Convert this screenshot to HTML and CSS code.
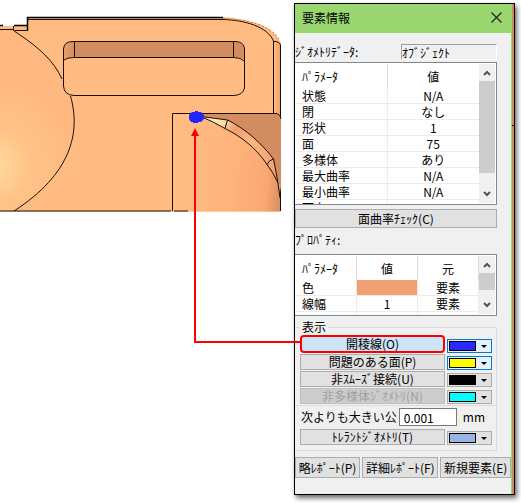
FILE: index.html
```html
<!DOCTYPE html>
<html lang="ja">
<head>
<meta charset="utf-8">
<title>要素情報</title>
<link rel="stylesheet" href="styles.css">
</head>
<body>
<main class="workspace">
  <section class="viewport" aria-label="モデル">
    <svg class="model" width="282" height="212" viewBox="0 0 282 212" fill="none" stroke="#1a1008" stroke-width="1">
      <defs>
        <radialGradient id="sphere" gradientUnits="userSpaceOnUse" cx="-8" cy="166" r="85">
          <stop offset="0" stop-color="#ffdc9c"/><stop offset=".45" stop-color="#ffc388"/><stop offset="1" stop-color="#ffb980"/>
        </radialGradient>
        <linearGradient id="dome" gradientUnits="userSpaceOnUse" x1="185" y1="180" x2="281" y2="190">
          <stop offset="0" stop-color="#ffbc82"/><stop offset=".5" stop-color="#ffb27b"/><stop offset=".85" stop-color="#fba774"/><stop offset="1" stop-color="#d98f64"/>
        </linearGradient>
        <linearGradient id="rim" gradientUnits="userSpaceOnUse" x1="205" y1="117" x2="276" y2="172">
          <stop offset="0" stop-color="#fff8dc"/><stop offset=".2" stop-color="#ffdca5"/><stop offset=".35" stop-color="#ef9d70"/><stop offset=".55" stop-color="#ffb780"/><stop offset="1" stop-color="#f3a072"/>
        </linearGradient>
        <linearGradient id="corner" gradientUnits="userSpaceOnUse" x1="64" y1="0" x2="75" y2="0">
          <stop offset="0" stop-color="#e9a06f"/><stop offset="1" stop-color="#cf8b60"/>
        </linearGradient>
        <linearGradient id="edge" gradientUnits="userSpaceOnUse" x1="274" y1="0" x2="281" y2="0">
          <stop offset="0" stop-color="#ffbb80"/><stop offset="1" stop-color="#ef9b6b"/>
        </linearGradient>
      </defs>
      <path stroke="none" fill="#ffbb81" d="M0 26H28V17H223C248 19 272 24 281 43V211.500H0Z"/>
      <path stroke="none" fill="url(#sphere)" d="M0 30H14C36 46 52 60 62 78L70 96C80 130 73 172 14 211H0Z"/>
      <path stroke="none" fill="url(#edge)" d="M274 41Q278 41 281 45V117L274 113Z"/>
      <path d="M0 25.500H3M14 25.500H27.500M27.500 30.500V17.500H223" stroke-width="1.500" stroke="#000"/>
      <path d="M28 19.500H223C245 20 268 27 273.500 41V113.500M0 29.500H14M14.500 30.500H28M13.500 26V30.500L20 35C38 47 54 61 62 79M70.500 96C81 133 71 174 14 211"/>
      <path d="M223 18.500C248 20 270 25 279 39" stroke="#b77b52" stroke-dasharray="2 2"/>
      <path d="M273.500 41.500Q279 41 280.500 45V211" />
      <path stroke="none" fill="#d38c60" d="M64 60V49Q64 42 74 41.500H234Q244 42 244 49V60Q241 57 234 57H74Q67 57 64 60Z"/>
      <path stroke="none" fill="url(#corner)" d="M64 60V49Q64 42 74 41.500V57Q67 57 64 60Z"/>
      <path d="M63.500 86V49Q64 42 72 41.500H236Q244 42 244.500 49V88Q243 95 234 95.500H74Q64 95 63.500 86M64 60Q67 57.500 74 57.500H234Q241 57.500 244 61M74.500 42V57M233.500 42V57"/>
      <path stroke="none" fill="url(#dome)" d="M173 114H192C225 121 271 147 280 190V211.500H173Z"/>
      <path stroke="none" fill="#d38c60" d="M200 114H278L281 118V192C275 158 246 122 200 116Z"/>
      <path fill="url(#rim)" d="M201 116.500Q216 118.500 227.500 120C246 129 262 144 273.500 159Q276 171 278 183Q273 172 267 164.500C256 148 242 137 225 128.500Q214 122 201 116.500Z"/>
      <path d="M172.500 211V113.500H277Q281 115 281 119M227.500 120L225 128.500M273.500 159Q269 160 267 164.500M278 183L280 198M0 211H171M174 211H188"/>
    </svg>
  </section>

  <section class="dialog" aria-labelledby="dialog-title">
    <header class="titlebar">
      <h1 id="dialog-title">要素情報</h1>
      <button class="close" aria-label="閉じる">
        <svg width="11" height="11" viewBox="0 0 11 11" stroke="#222" stroke-width="1.200"><path d="M.5.500l10 10M10.500.500l-10 10"/></svg>
      </button>
    </header>
    <div class="content">
      <div class="object-row">
        <label for="object">ｼﾞｵﾒﾄﾘﾃﾞｰﾀ:</label>
        <input id="object" class="sunken" value="ｵﾌﾞｼﾞｪｸﾄ" readonly>
      </div>

      <div class="list list-geometry">
        <table class="two">
          <thead><tr><th>ﾊﾟﾗﾒｰﾀ</th><th>値</th></tr></thead>
          <tbody>
            <tr><td>状態</td><td>N/A</td></tr>
            <tr><td>閉</td><td>なし</td></tr>
            <tr><td>形状</td><td>1</td></tr>
            <tr><td>面</td><td>75</td></tr>
            <tr><td>多様体</td><td>あり</td></tr>
            <tr><td>最大曲率</td><td>N/A</td></tr>
            <tr><td>最小曲率</td><td>N/A</td></tr>
            <tr><td>面上</td><td></td></tr>
          </tbody>
        </table>
        <div class="scrollbar">
          <svg width="8" height="6" viewBox="0 0 8 6"><path d="M1 5l3-3 3 3"/></svg>
          <span class="thumb"></span>
          <svg class="down" width="8" height="6" viewBox="0 0 8 6"><path d="M1 1l3 3 3-3"/></svg>
        </div>
      </div>

      <button class="btn check">面曲率ﾁｪｯｸ(C)</button>

      <h2 class="caption">ﾌﾟﾛﾊﾟﾃｨ:</h2>

      <div class="list list-property">
        <table class="three">
          <thead><tr><th>ﾊﾟﾗﾒｰﾀ</th><th>値</th><th>元</th></tr></thead>
          <tbody>
            <tr><td>色</td><td class="fill" aria-label="オレンジ"></td><td>要素</td></tr>
            <tr><td>線幅</td><td>1</td><td>要素</td></tr>
            <tr><td></td><td></td><td></td></tr>
          </tbody>
        </table>
        <div class="scrollbar">
          <svg width="8" height="6" viewBox="0 0 8 6"><path d="M1 5l3-3 3 3"/></svg>
          <span class="thumb"></span>
          <svg class="down" width="8" height="6" viewBox="0 0 8 6"><path d="M1 1l3 3 3-3"/></svg>
        </div>
      </div>

      <fieldset class="display">
        <legend>表示</legend>
        <div class="option">
          <button class="btn active">開稜線(O)</button>
          <div class="picker hot"><select aria-label="開稜線の色"></select><span class="swatch blue"></span><span class="arrow"></span></div>
        </div>
        <div class="option">
          <button class="btn">問題のある面(P)</button>
          <div class="picker hot"><select aria-label="問題のある面の色"></select><span class="swatch yellow"></span><span class="arrow"></span></div>
        </div>
        <div class="option">
          <button class="btn">非ｽﾑｰｽﾞ接続(U)</button>
          <div class="picker"><select aria-label="非スムーズ接続の色"></select><span class="swatch black"></span><span class="arrow"></span></div>
        </div>
        <div class="option">
          <button class="btn" disabled>非多様体ｼﾞｵﾒﾄﾘ(N)</button>
          <div class="picker"><select aria-label="非多様体の色"></select><span class="swatch cyan"></span><span class="arrow"></span></div>
        </div>
        <div class="tolerance">
          <label for="tolerance">次よりも大きい公</label>
          <input id="tolerance" value="0.001">
          <span>mm</span>
        </div>
        <div class="option">
          <button class="btn">ﾄﾚﾗﾝﾄｼﾞｵﾒﾄﾘ(T)</button>
          <div class="picker"><select aria-label="トレラントの色"></select><span class="swatch pale"></span><span class="arrow"></span></div>
        </div>
      </fieldset>

      <footer class="actions">
        <button class="btn">略ﾚﾎﾟｰﾄ(P)</button>
        <button class="btn">詳細ﾚﾎﾟｰﾄ(F)</button>
        <button class="btn">新規要素(E)</button>
      </footer>
    </div>
  </section>

  <svg class="callout" width="302" height="346" viewBox="0 0 302 346">
    <path fill="#2424ff" d="M192 112h3v-1h3v1h3l3 3v4l-3 3h-3v1h-5v-1h-2l-2-3v-4z"/>
    <path fill="#ff0000" d="M195 128l4 8h-8z"/>
    <path d="M195 135V342H300" fill="none" stroke="#ff0000" stroke-width="2"/>
  </svg>
</main>
</body>
</html>
```

FILE: styles.css
```css
* {
  box-sizing: border-box;
}

body {
  margin: 0;
  background: #fff;
  color: #000;
  font: 12px/16px "Noto Sans CJK JP", sans-serif;
}

button,
input {
  font: inherit;
  color: inherit;
}

h1,
h2 {
  margin: 0;
  font: inherit;
}

.workspace {
  position: relative;
  display: flex;
  align-items: flex-start;
  padding: 3px 6px 8px 0;
}

.viewport {
  flex: 1;
  min-width: 0;
  margin-top: -3px;
}

.model {
  display: block;
}

.callout {
  position: absolute;
  top: 0;
  left: 0;
  pointer-events: none;
}

.dialog {
  flex: 0 0 221px;
  padding-right: 2px;
  border: 1px solid #000;
  background: linear-gradient(#cf8a62 121px, #000 121px, #000 122px, #cf8a62 122px);
  box-shadow: 2px 3px 5px rgba(0, 0, 0, 0.6);
}

.titlebar {
  display: flex;
  align-items: center;
  justify-content: space-between;
  height: 29px;
  padding: 0 10px 2px 7px;
  background: #9ad771;
}

.close {
  display: flex;
  padding: 0;
  border: 0;
  background: none;
}

.content {
  display: flex;
  flex-direction: column;
  padding: 11px 0 16px;
  border-right: 1px solid #9ad771;
  background: #f0f0f0;
}

.object-row {
  display: flex;
  align-items: center;
  justify-content: space-between;
  height: 16px;
  margin-right: 14px;
}

.sunken {
  width: 96px;
  height: 16px;
  padding: 0;
  border: 1px solid;
  border-color: #a0a0a0 #fff #fff #a0a0a0;
  background: #f0f0f0;
  line-height: 14px;
}

.list {
  display: flex;
  overflow: hidden;
  margin-right: 14px;
  padding: 1px;
  border: 1px solid #828790;
  border-left: 0;
  background: #fff;
}

.list-geometry {
  height: 143px;
  margin-top: 2px;
}

.list-property {
  height: 62px;
}

table {
  flex: 1;
  width: 100%;
  height: max-content;
  border-collapse: separate;
  border-spacing: 0;
  table-layout: fixed;
}

th,
td {
  height: 16px;
  padding: 0;
  overflow: hidden;
  border-right: 1px solid #ececec;
  border-bottom: 1px solid #ececec;
  font-weight: normal;
  line-height: 15px;
  text-align: center;
  white-space: nowrap;
}

th {
  height: 24px;
  border-bottom: 0;
  border-right-color: #dcdcdc;
}

th:first-child,
td:first-child {
  padding-left: 6px;
  text-align: left;
}

.two th:first-child {
  width: 50%;
}

.two th:last-child,
.two td:last-child {
  border-right: 0;
}

.fill {
  background: #f0a070;
}

.scrollbar {
  display: flex;
  flex: none;
  flex-direction: column;
  align-items: center;
  width: 16px;
  padding: 6px 0;
  background: #f0f0f0;
}

.scrollbar path {
  fill: none;
  stroke: #555;
  stroke-width: 2;
}

.scrollbar svg {
  flex: none;
}

.scrollbar .down {
  margin-top: auto;
}

.thumb {
  width: 100%;
  height: 92px;
  margin-top: 5px;
  background: #cdcdcd;
}

.list-property .thumb {
  height: 17px;
}

.btn {
  display: flex;
  align-items: center;
  justify-content: center;
  padding: 0;
  border: 1px solid #adadad;
  background: #e1e1e1;
  white-space: nowrap;
}

.btn:disabled {
  border-color: #bfbfbf;
  background: #ccc;
  color: #a0a0a0;
}

.check {
  height: 19px;
  margin: 4px 14px 0 0;
}

.caption {
  margin: 4px 0 6px;
}

.display {
  min-width: 0;
  margin: 3px 14px 0 0;
  padding: 0 4px 4px 5px;
  border: 1px solid #dcdcdc;
  border-left: 0;
}

.display legend {
  padding: 0 2px;
  line-height: 16px;
}

.option {
  display: flex;
  align-items: flex-end;
  gap: 2px;
  margin-bottom: 1px;
}

.option .btn {
  flex: 1;
  height: 16px;
}

.option .active {
  height: 18px;
  border: 2px solid #f00;
  border-radius: 4px;
  background: #cce4f7;
}

.picker {
  display: grid;
  grid-template-columns: 28px 1fr;
  align-items: center;
  width: 45px;
  height: 14px;
  border: 1px solid #adadad;
  background: #e1e1e1;
}

.picker.hot {
  border-color: #0078d7;
  background: #e5f1fb;
}

.picker select {
  grid-area: 1 / 1 / 2 / 3;
  width: 100%;
  height: 12px;
  padding: 0;
  border: 0;
  appearance: none;
  background: none;
}

.swatch {
  grid-area: 1 / 1 / 2 / 2;
  height: 10px;
  margin-left: 1px;
  border: 1px solid #000;
  pointer-events: none;
}

.arrow {
  grid-area: 1 / 2 / 2 / 3;
  justify-self: center;
  border: 3px solid transparent;
  border-top-color: #000;
  border-bottom: 0;
  pointer-events: none;
}

.blue {
  background: #2828ff;
}

.yellow {
  background: #ff0;
}

.black {
  background: #000;
}

.cyan {
  background: #0ff;
}

.pale {
  background: #9bb4e6;
}

.tolerance {
  display: flex;
  align-items: center;
  margin: 1px -4px 3px -5px;
  padding: 2px 0 0 6px;
  border-top: 1px solid #dcdcdc;
}

.tolerance input {
  width: 58px;
  height: 18px;
  margin: 0 6px 0 2px;
  padding: 0 4px;
  border: 1px solid #7a7a7a;
  background: #fff;
  line-height: 16px;
}

.actions {
  display: flex;
  gap: 2px;
  margin-top: 6px;
}

.actions .btn {
  flex: 1 1 auto;
  height: 21px;
}
```
